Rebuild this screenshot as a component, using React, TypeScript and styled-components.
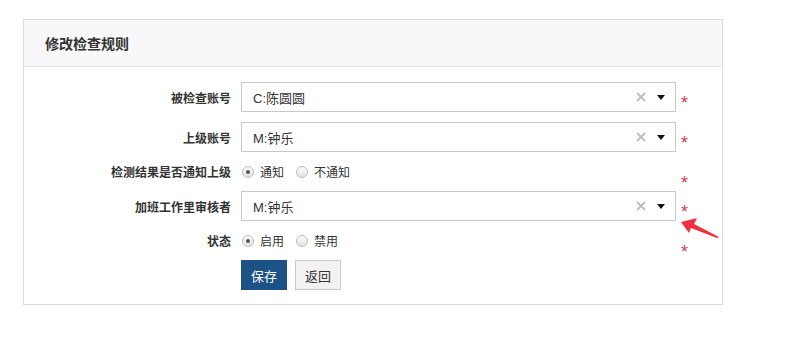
import React from "react";
import styled, { createGlobalStyle } from "styled-components";

const GlobalStyle = createGlobalStyle`
  html, body { margin: 0; padding: 0; background: #fff; }
  body {
    font-family: "Liberation Sans", Arial, "Noto Sans CJK SC", sans-serif;
    color: #333;
  }
`;

const Page = styled.div`
  position: relative;
  padding: 19px 0 0 23px;
  width: 790px;
  height: 363px;
  box-sizing: border-box;
`;

const Panel = styled.div`
  width: 700px;
  box-sizing: border-box;
  border: 1px solid #dcdcdc;
  background: #fff;
`;

const PanelHeader = styled.div`
  height: 46px;
  line-height: 48px;
  background: #f8f8fa;
  border-bottom: 1px solid #e2e2e4;
  padding-left: 21px;
  font-size: 14px;
  font-weight: bold;
  color: #333;
`;

const PanelBody = styled.div`
  padding: 15px 0 14px 0;
  display: flex;
  flex-direction: column;
  gap: 10px;
`;

const FormRow = styled.div<{ $h: number }>`
  display: grid;
  grid-template-columns: 207px 435px auto;
  grid-template-rows: ${(p) => p.$h}px;
  column-gap: 10px;
  height: ${(p) => p.$h}px;
  align-items: center;
`;

const Label = styled.div`
  text-align: right;
  font-size: 12px;
  font-weight: bold;
  color: #333;
  white-space: nowrap;
`;

const Required = styled.span`
  align-self: start;
  margin-left: -5px;
  padding-top: 12px;
  font-size: 18px;
  line-height: 18px;
  color: #d2404e;
`;

const Select = styled.div`
  height: 30px;
  box-sizing: border-box;
  border: 1px solid #c9c9c9;
  background: #fff;
  display: flex;
  align-items: center;
  padding: 0 10px 0 11px;
  font-size: 13px;
  color: #333;
`;

const SelectValue = styled.span`
  flex: 1;
`;

const ClearIcon = styled.svg`
  width: 10px;
  height: 10px;
  margin-right: 11px;
`;

const Caret = styled.svg`
  width: 8px;
  height: 5px;
`;

const RadioGroup = styled.div`
  display: flex;
  align-items: center;
  font-size: 12px;
  color: #333;
`;

const RadioItem = styled.label`
  display: flex;
  align-items: center;
  gap: 6px;
  margin-left: 1px;
  margin-right: 11px;
`;

const RadioDot = styled.span<{ $checked?: boolean }>`
  width: 12px;
  height: 12px;
  box-sizing: border-box;
  border-radius: 50%;
  border: 1px solid #bdbdbd;
  background: linear-gradient(#fbfbfb, #e2e2e2);
  display: flex;
  align-items: center;
  justify-content: center;
  &::after {
    content: "";
    display: ${(p) => (p.$checked ? "block" : "none")};
    width: 4px;
    height: 4px;
    border-radius: 50%;
    background: #555;
  }
`;

const Buttons = styled.div`
  display: flex;
  gap: 8px;
`;

const Button = styled.button<{ $primary?: boolean }>`
  height: 30px;
  width: 46px;
  padding: 0;
  box-sizing: border-box;
  font-family: inherit;
  font-size: 13px;
  border: 1px solid ${(p) => (p.$primary ? "#1b4f85" : "#c8c8c8")};
  background: ${(p) => (p.$primary ? "#1d5287" : "#f2f2f2")};
  color: ${(p) => (p.$primary ? "#fff" : "#333")};
  cursor: pointer;
`;

const ArrowMark = styled.svg`
  position: absolute;
  left: 676px;
  top: 215px;
  width: 46px;
  height: 26px;
`;

const SelectBox = ({ value }: { value: string }) => (
  <Select>
    <SelectValue>{value}</SelectValue>
    <ClearIcon viewBox="0 0 10 10">
      <path d="M1 1L9 9M9 1L1 9" stroke="#bdbdbd" strokeWidth="1.8" />
    </ClearIcon>
    <Caret viewBox="0 0 8 5">
      <path d="M0 0H8L4 5Z" fill="#111" />
    </Caret>
  </Select>
);

export default function App() {
  return (
    <Page>
      <GlobalStyle />
      <Panel>
        <PanelHeader>修改检查规则</PanelHeader>
        <PanelBody>
          <FormRow $h={30}>
            <Label>被检查账号</Label>
            <SelectBox value="C:陈圆圆" />
            <Required>*</Required>
          </FormRow>
          <FormRow $h={30}>
            <Label>上级账号</Label>
            <SelectBox value="M:钟乐" />
            <Required>*</Required>
          </FormRow>
          <FormRow $h={19}>
            <Label>检测结果是否通知上级</Label>
            <RadioGroup>
              <RadioItem>
                <RadioDot $checked />
                通知
              </RadioItem>
              <RadioItem>
                <RadioDot />
                不通知
              </RadioItem>
            </RadioGroup>
            <Required>*</Required>
          </FormRow>
          <FormRow $h={30}>
            <Label>加班工作里审核者</Label>
            <SelectBox value="M:钟乐" />
            <Required>*</Required>
          </FormRow>
          <FormRow $h={19}>
            <Label>状态</Label>
            <RadioGroup>
              <RadioItem>
                <RadioDot $checked />
                启用
              </RadioItem>
              <RadioItem>
                <RadioDot />
                禁用
              </RadioItem>
            </RadioGroup>
            <Required>*</Required>
          </FormRow>
          <FormRow $h={30}>
            <span />
            <Buttons>
              <Button $primary>保存</Button>
              <Button>返回</Button>
            </Buttons>
          </FormRow>
        </PanelBody>
      </Panel>
      <ArrowMark viewBox="0 0 46 26">
        <path
          d="M5 7 L21 3 L18 9 L43 22 L41 23 L15 13 L13 18 Z"
          fill="#f0303a"
        />
      </ArrowMark>
    </Page>
  );
}
